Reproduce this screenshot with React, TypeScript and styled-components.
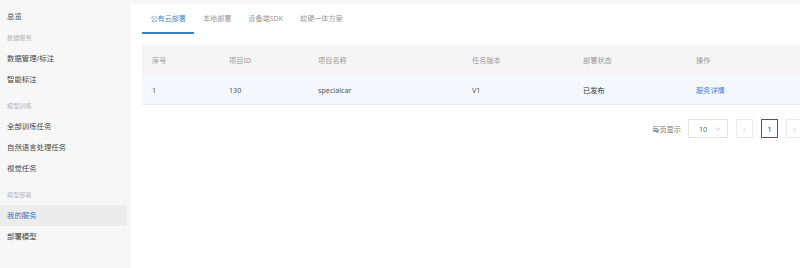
import React from "react";
import styled, { createGlobalStyle } from "styled-components";

const GlobalStyle = createGlobalStyle`
  html, body {
    margin: 0;
    padding: 0;
    background: #f7f7f7;
    overflow: hidden;
  }
  body {
    font-family: "Noto Sans", "Noto Sans CJK SC", sans-serif;
    color: #333;
  }
`;

type NavEntry = { label: string; group?: boolean; active?: boolean };

const nav: NavEntry[] = [
  { label: "总览" },
  { label: "数据服务", group: true },
  { label: "数据管理/标注" },
  { label: "智能标注" },
  { label: "模型训练", group: true },
  { label: "全部训练任务" },
  { label: "自然语言处理任务" },
  { label: "视觉任务" },
  { label: "模型部署", group: true },
  { label: "我的服务", active: true },
  { label: "部署模型" },
];

const tabs = ["公有云部署", "本地部署", "设备端SDK", "软硬一体方案"];
const columns = ["序号", "项目ID", "项目名称", "任务版本", "部署状态", "操作"];

const App: React.FC = () => {
  return (
    <>
      <GlobalStyle />
      <Layout>
        <Sidebar>
          {nav.map((item, i) =>
            item.group ? (
              <GroupLabel key={item.label} $first={i === 1}>
                {item.label}
              </GroupLabel>
            ) : (
              <NavItem key={item.label} $active={item.active}>
                {item.label}
              </NavItem>
            )
          )}
        </Sidebar>
        <Main>
          <Card>
            <TabBar>
              {tabs.map((t, i) => (
                <Tab key={t} $active={i === 0}>
                  {t}
                </Tab>
              ))}
            </TabBar>
            <Table>
              <HeadRow>
                {columns.map((c) => (
                  <Cell key={c}>{c}</Cell>
                ))}
              </HeadRow>
              <BodyRow>
                <Cell>1</Cell>
                <Cell>130</Cell>
                <Cell>specialcar</Cell>
                <Cell>V1</Cell>
                <Cell $strong>已发布</Cell>
                <Cell>
                  <LinkText>服务详情</LinkText>
                </Cell>
              </BodyRow>
            </Table>
            <Pager>
              <PagerLabel>每页显示</PagerLabel>
              <SizeSelect>
                <span>10</span>
                <Chevron viewBox="0 0 10 6">
                  <path d="M1 1l4 4 4-4" fill="none" stroke="#aaa" strokeWidth="1" />
                </Chevron>
              </SizeSelect>
              <PageBox $muted>‹</PageBox>
              <PageBox $current>1</PageBox>
              <PageBox $muted>›</PageBox>
            </Pager>
          </Card>
        </Main>
      </Layout>
    </>
  );
};

export default App;

const Layout = styled.div`
  display: flex;
  width: 820px;
  height: 268px;
`;

const Sidebar = styled.nav`
  width: 127px;
  flex-shrink: 0;
  background: #f7f7f7;
  padding-top: 6px;
  display: flex;
  flex-direction: column;
`;

const NavItem = styled.div<{ $active?: boolean }>`
  height: 21px;
  line-height: 21px;
  padding-left: 7px;
  font-size: 7.4px;
  color: ${(p) => (p.$active ? "#3e6cb8" : "#444")};
  background: ${(p) => (p.$active ? "#ececec" : "transparent")};
`;

const GroupLabel = styled.div<{ $first?: boolean }>`
  height: 21px;
  line-height: 21px;
  margin-top: ${(p) => (p.$first ? "0" : "5px")};
  padding-left: 7px;
  font-size: 6.2px;
  color: #b8b8b8;
`;

const Main = styled.main`
  flex: 1;
  padding: 4px 0 0 4px;
`;

const Card = styled.section`
  background: #fff;
  width: 683px;
  height: 100%;
  box-sizing: border-box;
  padding: 0 11px;
`;

const TabBar = styled.div`
  display: flex;
  height: 30px;
`;

const Tab = styled.div<{ $active?: boolean }>`
  padding: 0 8.5px;
  display: flex;
  align-items: center;
  font-size: 7.1px;
  color: ${(p) => (p.$active ? "#4a8bcc" : "#999")};
  border-bottom: 2px solid ${(p) => (p.$active ? "#3a80c8" : "transparent")};
`;

const Table = styled.div`
  margin-top: 11px;
  font-size: 7.2px;
`;

const gridCols = "77px 89px 154px 111px 113px 1fr";

const HeadRow = styled.div`
  display: grid;
  grid-template-columns: ${gridCols};
  height: 30px;
  align-items: center;
  background: #f5f5f5;
  color: #999;
`;

const BodyRow = styled.div`
  display: grid;
  grid-template-columns: ${gridCols};
  height: 29px;
  align-items: center;
  background: #f4f8fd;
  border-bottom: 1px solid #e9eef4;
  color: #555;
`;

const Cell = styled.div<{ $strong?: boolean }>`
  padding-left: 10px;
  white-space: nowrap;
  color: ${(p) => (p.$strong ? "#333" : "inherit")};
`;

const LinkText = styled.span`
  color: #4580cf;
`;

const Pager = styled.div`
  display: flex;
  justify-content: flex-end;
  align-items: center;
  margin-top: 14px;
  gap: 8px;
  font-size: 7.2px;
`;

const PagerLabel = styled.span`
  color: #777;
  margin-right: -1px;
`;

const SizeSelect = styled.div`
  width: 40px;
  height: 19px;
  box-sizing: border-box;
  border: 1px solid #e3e3e3;
  display: flex;
  align-items: center;
  justify-content: space-between;
  padding: 0 6px 0 10px;
  color: #666;
`;

const Chevron = styled.svg`
  width: 6px;
  height: 4px;
`;

const PageBox = styled.div<{ $current?: boolean; $muted?: boolean }>`
  width: 17px;
  height: 19px;
  box-sizing: border-box;
  border: 1px solid ${(p) => (p.$current ? "#4a5868" : "#ececec")};
  display: flex;
  align-items: center;
  justify-content: center;
  color: ${(p) => (p.$muted ? "#d0d0d0" : "#444")};
  font-size: ${(p) => (p.$muted ? "9px" : "7.2px")};
`;
